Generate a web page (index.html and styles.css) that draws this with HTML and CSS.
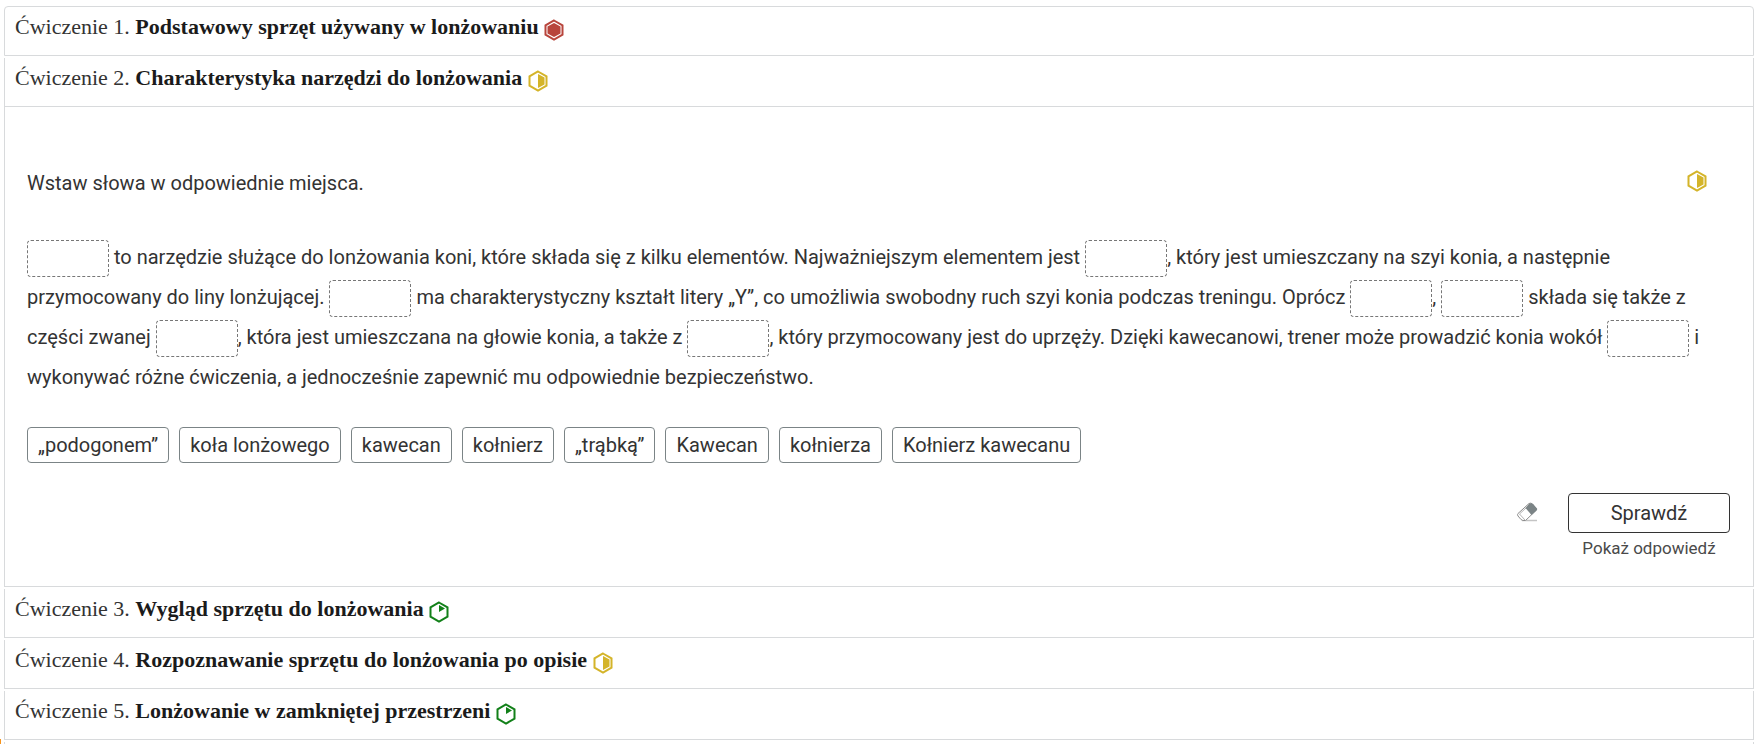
FILE: index.html
```html
<!DOCTYPE html>
<html lang="pl">
<head>
    <meta charset="UTF-8">
    <meta name="viewport" content="width=device-width, initial-scale=1">
    <title>Ćwiczenia</title>
    <link rel="stylesheet" href="styles.css">
</head>
<body>
    <!-- difficulty levels and eraser -->
    <svg class="symbols" aria-hidden="true">
        <symbol id="easy" viewBox="0 0 20 22">
            <path d="M10 1.500 L18.500 6.300 V15.700 L10 20.500 L1.500 15.700 V6.300 Z" fill="none" stroke="currentColor" stroke-width="2"/>
            <path d="M10 4 L16 7.500 L10 11 Z" fill="currentColor"/>
        </symbol>
        <symbol id="medium" viewBox="0 0 20 22">
            <path d="M10 1.500 L18.500 6.300 V15.700 L10 20.500 L1.500 15.700 V6.300 Z" fill="none" stroke="currentColor" stroke-width="2"/>
            <path d="M10 4 L16.500 7.500 V14.500 L10 18 Z" fill="currentColor"/>
        </symbol>
        <symbol id="hard" viewBox="0 0 20 22">
            <path d="M10 1.500 L18.500 6.300 V15.700 L10 20.500 L1.500 15.700 V6.300 Z" fill="none" stroke="currentColor" stroke-width="2"/>
            <path d="M10 4 L16.500 7.500 V14.500 L10 18 L3.500 14.500 V7.500 Z" fill="currentColor"/>
        </symbol>
        <symbol id="eraser" viewBox="0 0 22 20">
            <path d="M6 18.500 H21" stroke="#c4c4c4" stroke-width="1.500"/>
            <path d="M13 1.500 L2 11.500 Q1 12.500 2 14 L5 17.500 Q6 18.500 8 18.500 H9.500 L20 8.500 Q21 7.500 20 6.500 L16.500 2 Q15 .500 13 1.500 Z" fill="#fff" stroke="#8c8c8c"/>
            <path d="M3.500 12 L9 18 M3.500 12 L10 6" fill="none" stroke="#b5b5b5"/>
            <path d="M9.500 6 L13 2 Q15 .500 17 2 L21 6.500 Q21.500 7.500 20.500 8.500 L15.500 13 Z" fill="#7b8486"/>
        </symbol>
    </svg>

    <main class="exercises">
        <section class="item">
            <h3 class="item-title">
                <button type="button" aria-expanded="false">Ćwiczenie 1. <b>Podstawowy sprzęt używany w lonżowaniu</b> <svg class="level hard"><use href="#hard"/></svg></button>
            </h3>
        </section>
        <section class="item">
            <h3 class="item-title">
                <button type="button" aria-expanded="true" aria-controls="panel">Ćwiczenie 2. <b>Charakterystyka narzędzi do lonżowania</b> <svg class="level medium"><use href="#medium"/></svg></button>
            </h3>
            <div class="panel" id="panel">
                <div class="task">
                    <p>Wstaw słowa w odpowiednie miejsca.</p>
                    <svg class="level medium"><use href="#medium"/></svg>
                </div>
                <p class="cloze">
                    <button type="button" class="gap" aria-label="Luka 1"></button> to narzędzie służące do lonżowania koni, które składa się z kilku elementów. Najważniejszym elementem jest <button type="button" class="gap" aria-label="Luka 2"></button>, który jest umieszczany na szyi konia, a następnie przymocowany do liny lonżującej. <button type="button" class="gap" aria-label="Luka 3"></button> ma charakterystyczny kształt litery „Y”, co umożliwia swobodny ruch szyi konia podczas treningu. Oprócz <button type="button" class="gap" aria-label="Luka 4"></button>, <button type="button" class="gap" aria-label="Luka 5"></button> składa się także z części zwanej <button type="button" class="gap" aria-label="Luka 6"></button>, która jest umieszczana na głowie konia, a także z <button type="button" class="gap" aria-label="Luka 7"></button>, który przymocowany jest do uprzęży. Dzięki kawecanowi, trener może prowadzić konia wokół <button type="button" class="gap" aria-label="Luka 8"></button> i wykonywać różne ćwiczenia, a jednocześnie zapewnić mu odpowiednie bezpieczeństwo.
                </p>
                <div class="words">
                    <button type="button">„podogonem”</button>
                    <button type="button">koła lonżowego</button>
                    <button type="button">kawecan</button>
                    <button type="button">kołnierz</button>
                    <button type="button">„trąbką”</button>
                    <button type="button">Kawecan</button>
                    <button type="button">kołnierza</button>
                    <button type="button">Kołnierz kawecanu</button>
                </div>
                <div class="actions">
                    <button type="button" class="clear" aria-label="Wyczyść"><svg><use href="#eraser"/></svg></button>
                    <div class="answer">
                        <button type="button" class="check">Sprawdź</button>
                        <button type="button" class="show">Pokaż odpowiedź</button>
                    </div>
                </div>
            </div>
        </section>
        <section class="item">
            <h3 class="item-title">
                <button type="button" aria-expanded="false">Ćwiczenie 3. <b>Wygląd sprzętu do lonżowania</b> <svg class="level easy"><use href="#easy"/></svg></button>
            </h3>
        </section>
        <section class="item">
            <h3 class="item-title">
                <button type="button" aria-expanded="false">Ćwiczenie 4. <b>Rozpoznawanie sprzętu do lonżowania po opisie</b> <svg class="level medium"><use href="#medium"/></svg></button>
            </h3>
        </section>
        <section class="item">
            <h3 class="item-title">
                <button type="button" aria-expanded="false">Ćwiczenie 5. <b>Lonżowanie w zamkniętej przestrzeni</b> <svg class="level easy"><use href="#easy"/></svg></button>
            </h3>
        </section>
        <div class="item-end"></div>
    </main>
    <div class="side-tab"></div>
</body>
</html>
```

FILE: styles.css
```css
* {box-sizing: border-box;}
body {margin: 0; background: #fff; color: #333; font: 20px/40px Roboto, "Noto Sans", sans-serif;}
p, h3 {margin: 0;}
button {padding: 0; border: 0; background: none; color: inherit; font: inherit; cursor: pointer;}
.symbols {display: none;}

.exercises {padding: 6px 6px 0 4px;}
.item {margin-bottom: 2px; border: 1px solid #d8dadc; border-top: 0;}
.item:first-child {border-top: 1px solid #d8dadc; border-radius: 4px 4px 0 0;}
.item-end {height: 3px; border: solid #d8dadc; border-width: 0 1px;}
.item-title {font: 400 22px/26px "Liberation Serif", serif;}
.item-title button {display: block; width: 100%; padding: 7px 10px 14px; color: #333; text-align: left;}
.item-title b {color: #1b1b1b; font-weight: 700;}

.level {width: 20px; height: 22px; vertical-align: -7px;}
.hard {color: #b8453c;}
.medium {color: #d4b429;}
.easy {color: #128019;}

.panel {padding: 56px 23px 24px 22px; border-top: 1px solid #d8dadc;}
.task {display: flex; justify-content: space-between; padding-right: 23px; margin-bottom: 34px;}
.task .level {margin-top: 7px;}
.cloze {margin-bottom: 30px;}
.gap {width: 82px; height: 37px; margin: -2px 0; border: 1px dashed #777; border-radius: 4px; vertical-align: middle;}

.words {display: flex; flex-wrap: wrap; gap: 10px; margin-bottom: 30px;}
.words button {height: 36px; padding: 0 10px; border: 1px solid #7b8486; border-radius: 4px; line-height: 34px;}

.actions {display: flex; justify-content: flex-end; gap: 30px;}
.clear {height: 38px; line-height: 0;}
.clear svg {width: 22px; height: 20px;}
.answer {display: flex; flex-direction: column; align-items: center;}
.check {width: 162px; height: 40px; border: 1px solid #333; border-radius: 4px; line-height: 38px;}
.show {padding-top: 1px; color: #4a4a4a; font-size: 17px; line-height: 28px;}

.side-tab {position: fixed; left: 0; bottom: 0; width: 1px; height: 5px; background: #f7941d;}
```
